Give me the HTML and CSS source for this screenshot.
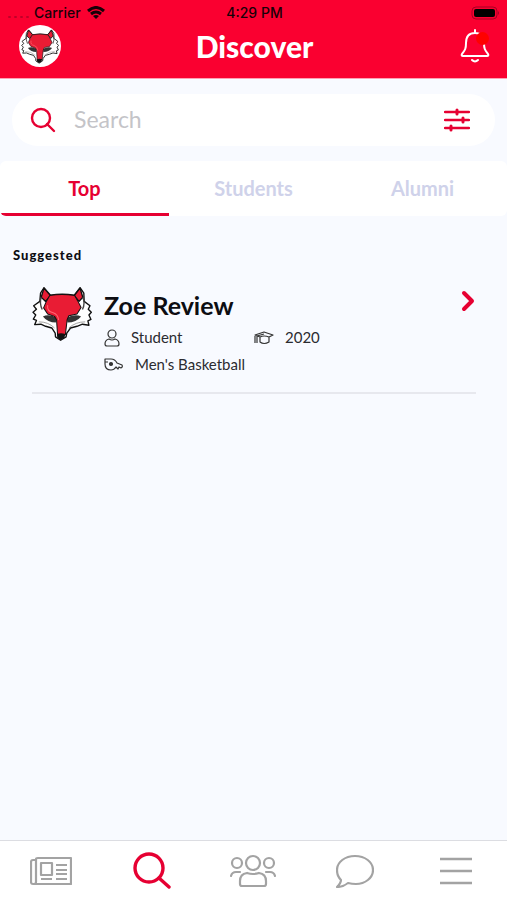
FILE: index.html
```html
<!DOCTYPE html>
<html lang="en">
<head>
    <meta charset="UTF-8">
    <meta name="viewport" content="width=device-width, initial-scale=1.0">
    <title>Discover</title>
    <link rel="stylesheet" href="styles.css">
</head>
<body>

<!-- Shared fox logo -->
<svg class="sprite" aria-hidden="true">
    <symbol id="fox" viewBox="40 36 176 162">
        <path d="M75 40 L65 56 L63 80 L45 93 L53 103 L43 112 L51 120 L44 132 L53 136 L48 148 L66 147 L80 153 L98 158 L108 173 L109 184 L124 194 L140 184 L142 173 L153 158 L172 153 L188 147 L207 150 L204 137 L213 133 L207 120 L214 112 L205 103 L210 93 L193 80 L192 56 L181 40 L164 62 Q128 56 94 62 Z" fill="#fff" stroke="#111" stroke-width="4" stroke-linejoin="round"/>
        <path d="M75 41 L94 63 L80 80 L67 68 Z M181 41 L164 63 L178 80 L189 68 Z" fill="#e91c34" stroke="#111" stroke-width="4" stroke-linejoin="round"/>
        <path d="M72 124 Q90 116 112 128 L110 142 Q86 142 72 124 Z M184 124 Q166 116 142 128 L144 142 Q170 142 184 124 Z" fill="#333"/>
        <path d="M67 68 Q61 86 70 104 M189 68 Q197 86 188 104" fill="none" stroke="#444" stroke-width="4"/>
        <path d="M60 140 Q88 140 106 158 M196 140 Q168 140 148 158" fill="none" stroke="#777" stroke-width="2"/>
        <path d="M92 63 Q128 56 165 63 L175 80 L184 98 L172 117 L148 122 L143 134 L138 178 L115 178 L112 134 L106 124 L86 117 L74 99 L82 80 Z" fill="#e91c34" stroke="#111" stroke-width="3" stroke-linejoin="round"/>
        <path d="M86 92 Q83 109 102 113 Q116 117 118 134" fill="none" stroke="#ff6672" stroke-width="3" stroke-linecap="round"/>
        <path d="M113 176 Q125 171 138 176 L135 187 L124 193 L114 187 Z" fill="#111"/>
    </symbol>
</svg>

<header class="header">
    <div class="status-bar">
        <div class="carrier">
            <span class="signal"><i></i><i></i><i></i><i></i></span>
            <span>Carrier</span>
            <svg width="20" height="14" viewBox="0 0 20 14">
                <path d="M2 5 Q10 -2 18 5 M5 8 Q10 4 15 8" fill="none" stroke="#180008" stroke-width="3"/>
                <path d="M7 10 Q10 8 13 10 L10 13 Z" fill="#180008"/>
            </svg>
        </div>
        <span>4:29 PM</span>
        <div class="battery">
            <svg width="30" height="14" viewBox="0 0 30 14">
                <rect x="1" y="1" width="25" height="12" rx="4" fill="none" stroke="#a50024"/>
                <rect x="3" y="3" width="21" height="8" rx="2" fill="#000"/>
                <path d="M27 5 Q29 7 27 9 Z" fill="#a50024"/>
            </svg>
        </div>
    </div>
    <div class="title-bar">
        <a href="#" class="avatar" aria-label="Profile"><svg width="38" height="35"><use href="#fox"/></svg></a>
        <h1>Discover</h1>
        <button type="button" class="bell" aria-label="Notifications">
            <svg width="30" height="34" viewBox="0 0 30 34" fill="none" stroke="#fff" stroke-width="2" stroke-linecap="round" stroke-linejoin="round">
                <path d="M15 1 V4 M15 4 C8 4 6 9 6 14 C6 20 5 21 2 25 Q1 27 3 27 H27 Q29 27 28 25 C25 21 24 20 24 14 C24 9 22 4 15 4 M12 31 Q15 34 18 31"/>
            </svg>
            <span class="dot"></span>
        </button>
    </div>
</header>

<main>
    <form class="search">
        <button type="submit" aria-label="Search">
            <svg width="26" height="26" viewBox="0 0 26 26" fill="none" stroke="#e60032" stroke-width="2.4" stroke-linecap="round">
                <circle cx="11" cy="11" r="9"/>
                <path d="M17 17 L24 24"/>
            </svg>
        </button>
        <input type="search" placeholder="Search" aria-label="Search">
        <button type="button" aria-label="Filters">
            <svg width="26" height="24" viewBox="0 0 26 24" fill="none" stroke="#e60032" stroke-linecap="round">
                <path d="M1 4 H25 M1 12 H25 M1 20 H25" stroke-width="2.4"/>
                <path d="M13 2 V6 M19 10 V14 M7 18 V22" stroke-width="3"/>
            </svg>
        </button>
    </form>

    <nav class="tabs">
        <a href="#" class="active">Top</a>
        <a href="#">Students</a>
        <a href="#">Alumni</a>
    </nav>

    <section class="suggested">
        <h2>Suggested</h2>
        <a href="#" class="person">
            <svg class="photo" width="60" height="56"><use href="#fox"/></svg>
            <div class="info">
                <h3>Zoe Review</h3>
                <ul class="details">
                    <li>
                        <svg width="16" height="18" viewBox="0 0 16 18" fill="none" stroke="#333" stroke-width="1.2">
                            <circle cx="8" cy="5" r="4"/>
                            <path d="M5 10 Q8 12 11 10 Q15 11 15 15 Q15 17 13 17 H3 Q1 17 1 15 Q1 11 5 10 Z"/>
                        </svg>
                        Student
                    </li>
                    <li>
                        <svg width="20" height="14" viewBox="0 0 20 14" fill="none" stroke="#333" stroke-width="1.2" stroke-linejoin="round">
                            <path d="M1 4 L10 1 L19 4 L15 6 Q10 4 6 6 Z M6 6 V11 Q10 14 15 11 V6 M10 3 L3 5 V12 M1 12 V5"/>
                        </svg>
                        2020
                    </li>
                    <li>
                        <svg width="20" height="14" viewBox="0 0 20 14" fill="none" stroke="#333" stroke-width="1.2" stroke-linejoin="round">
                            <path d="M1 1 H7 Q11 1 13 5 L18 7 Q19 9 17 10 L15 9 L14 11 L12 9 Q10 12 7 12 Q1 12 1 6 Z M1 4 H4"/>
                            <circle cx="7" cy="6" r="1.5" fill="#333"/>
                        </svg>
                        Men's Basketball
                    </li>
                </ul>
            </div>
            <svg class="arrow" width="16" height="22" viewBox="0 0 16 22" fill="none" stroke="#e60032" stroke-width="4" stroke-linecap="round" stroke-linejoin="round">
                <path d="M4 3 L12 11 L4 19"/>
            </svg>
        </a>
    </section>
</main>

<nav class="bottom-nav">
    <a href="#" aria-label="News">
        <svg width="42" height="30" viewBox="0 0 42 30" fill="none" stroke="#a3a3a3" stroke-width="2.2" stroke-linejoin="round">
            <path d="M6 3 Q6 2 8 2 H41 V28 H3 Q1 28 1 26 V6 Q1 4 3 4 H6 M6 3 V26 Q6 28 4 28"/>
            <rect x="11" y="7" width="11" height="12"/>
            <path d="M26 9 H37 M26 14 H37 M26 18 H37 M11 23 H22 M26 23 H37"/>
        </svg>
    </a>
    <a href="#" aria-label="Discover">
        <svg width="38" height="38" viewBox="0 0 38 38" fill="none" stroke="#e60032" stroke-width="3.4" stroke-linecap="round">
            <circle cx="16" cy="16" r="14"/>
            <path d="M26 26 L36 35"/>
        </svg>
    </a>
    <a href="#" aria-label="Groups">
        <svg width="46" height="34" viewBox="0 0 46 34" fill="none" stroke="#a3a3a3" stroke-width="2.2" stroke-linecap="round">
            <circle cx="23" cy="9" r="7"/>
            <circle cx="7" cy="9" r="5"/>
            <circle cx="39" cy="9" r="5"/>
            <path d="M17 19 Q23 21 29 19 Q36 20 36 27 V30 Q36 32 34 32 H12 Q10 32 10 30 V27 Q10 20 17 19 Z M1 22 Q2 18 6 18 H10 M45 22 Q44 18 40 18 H36"/>
        </svg>
    </a>
    <a href="#" aria-label="Messages">
        <svg width="38" height="34" viewBox="0 0 38 34" fill="none" stroke="#a3a3a3" stroke-width="2.2" stroke-linejoin="round">
            <path d="M19 2 C29 2 37 8 37 16 C37 24 29 30 20 30 Q16 30 12 29 Q7 33 1 33 Q5 29 5 26 Q1 22 1 16 C1 8 9 2 19 2 Z"/>
        </svg>
    </a>
    <a href="#" aria-label="Menu">
        <svg width="34" height="28" viewBox="0 0 34 28" stroke="#a3a3a3" stroke-width="2.4">
            <path d="M1 2 H33 M1 14 H33 M1 26 H33"/>
        </svg>
    </a>
</nav>

</body>
</html>
```
FILE: styles.css
```css
* {
    box-sizing: border-box;
}
body {
    font-family: "Lato", sans-serif;
    margin: 0;
    background-color: #f8faff;
    color: #0d0d12;
    display: flex;
    flex-direction: column;
    min-height: 100vh;
}
h1, h2, h3, ul {
    margin: 0;
    padding: 0;
}
a {
    color: inherit;
    text-decoration: none;
}
button {
    border: none;
    background: none;
    padding: 0;
    cursor: pointer;
}
svg {
    display: block;
    flex-shrink: 0;
}
.sprite {
    position: absolute;
    width: 0;
    height: 0;
}

/* Header */
.header {
    background-color: #fa0030;
    height: 79px;
    border-bottom: 1px solid #fda0b4;
}
.status-bar {
    display: grid;
    grid-template-columns: 1fr auto 1fr;
    align-items: center;
    height: 25px;
    padding: 0 6px 0 8px;
    font-family: "Inter", sans-serif;
    font-size: 14px;
    font-weight: 500;
    color: #180008;
}
.carrier {
    display: flex;
    align-items: center;
    gap: 5px;
}
.signal {
    display: flex;
    gap: 3px;
    padding-top: 8px;
}
.signal i {
    width: 3px;
    height: 2px;
    border-radius: 1px;
    background-color: #c00028;
}
.battery {
    justify-self: end;
}
.title-bar {
    display: grid;
    grid-template-columns: 1fr auto 1fr;
    align-items: center;
    height: 42px;
    padding: 0 17px 0 19px;
}
.title-bar h1 {
    font-size: 30px;
    line-height: 40px;
    font-weight: 900;
    color: #fff;
}
.avatar {
    display: flex;
    align-items: center;
    justify-content: center;
    width: 42px;
    height: 42px;
    border-radius: 50%;
    background-color: #fff;
}
.bell {
    position: relative;
    justify-self: end;
}
.bell .dot {
    position: absolute;
    top: 3px;
    right: 1px;
    width: 13px;
    height: 13px;
    border-radius: 50%;
    background-color: #ff0000;
}

/* Search */
.search {
    display: flex;
    align-items: center;
    gap: 18px;
    height: 52px;
    margin: 15px 12px;
    padding: 0 25px 0 18px;
    border-radius: 26px;
    background-color: #fff;
}
.search input {
    flex: 1;
    min-width: 0;
    padding: 0 0 2px;
    border: none;
    outline: none;
    background: none;
    font-family: inherit;
    font-size: 23px;
}
.search input::placeholder {
    color: #c4c4c8;
    opacity: 1;
}

/* Tabs */
.tabs {
    display: grid;
    grid-template-columns: repeat(3, 1fr);
    background-color: #fff;
    border-radius: 6px;
    overflow: hidden;
}
.tabs a {
    height: 55px;
    line-height: 54px;
    text-align: center;
    font-size: 20px;
    font-weight: 700;
    color: #cfd2ea;
}
.tabs .active {
    color: #e60032;
    border-bottom: 3px solid #e60032;
}

/* Suggested list */
.suggested h2 {
    padding: 31px 13px 0;
    font-size: 13px;
    line-height: 16px;
    font-weight: 900;
    letter-spacing: 1px;
}
.person {
    display: flex;
    align-items: flex-start;
    margin: 0 31px 0 32px;
    padding: 23px 0 14px;
    border-bottom: 2px solid #e7e8ee;
}
.info {
    flex: 1;
    margin-left: 12px;
}
.info h3 {
    font-size: 25px;
    line-height: 38px;
}
.details {
    display: grid;
    grid-template-columns: 150px 1fr;
    list-style: none;
    font-size: 15px;
    color: #2b2b30;
}
.details li {
    display: flex;
    align-items: center;
    gap: 11px;
    line-height: 27px;
    white-space: nowrap;
}
.arrow {
    margin-top: 4px;
}

/* Bottom navigation */
.bottom-nav {
    display: grid;
    grid-template-columns: repeat(5, 1fr);
    margin-top: auto;
    height: 60px;
    background-color: #fff;
    border-top: 1px solid #dcdde2;
}
.bottom-nav a {
    display: flex;
    align-items: center;
    justify-content: center;
}
```
